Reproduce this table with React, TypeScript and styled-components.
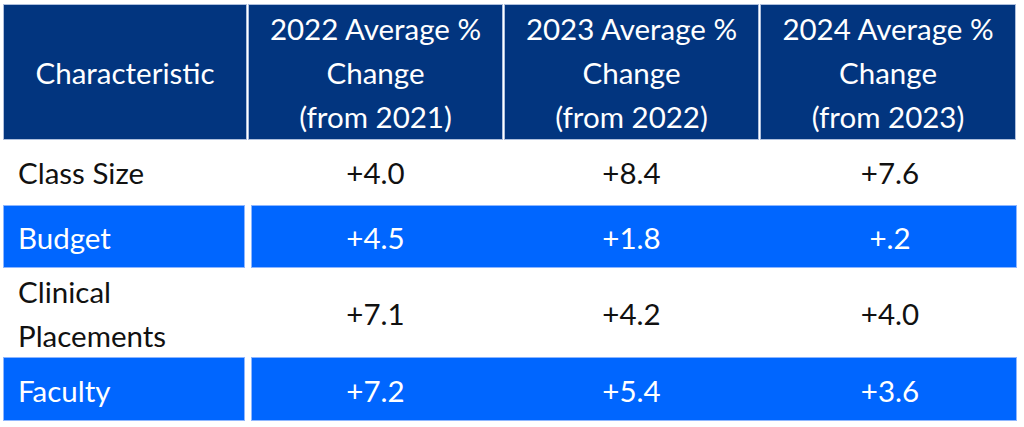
import styled, { createGlobalStyle } from "styled-components"

const GlobalStyle = createGlobalStyle`
  html, body {
    margin: 0;
    padding: 0;
    background: #ffffff;
  }
  body {
    font-family: "Lato", "Liberation Sans", sans-serif;
  }
`

const NAVY = "#02357f"
const BLUE = "#0066ff"

const Table = styled.div`
  width: 1024px;
  height: 427px;
  box-sizing: border-box;
  padding: 5px 0 0 4px;
  display: flex;
  flex-direction: column;
  font-size: 29.5px;
  line-height: 44px;
`

const HeaderRow = styled.div`
  display: grid;
  grid-template-columns: 242px 253px 253px 254px;
  column-gap: 3px;
  height: 132px;
`

const HeaderCell = styled.div`
  background: ${NAVY};
  box-shadow: 0 0 0 1px #aebfdd;
  color: #ffffff;
  display: flex;
  align-items: center;
  justify-content: center;
  text-align: center;
  padding-top: 2px;
`

const Row = styled.div<{ $height: number; $shaded?: boolean }>`
  display: grid;
  grid-template-columns: 240px 764px;
  column-gap: 8px;
  height: ${(p) => p.$height}px;
  color: ${(p) => (p.$shaded ? "#ffffff" : "#111111")};

  & > div {
    background: ${(p) => (p.$shaded ? BLUE : "transparent")};
    box-shadow: ${(p) => (p.$shaded ? "0 0 0 1px #8db6ff" : "none")};
    padding-top: 3px;
  }
`

const Label = styled.div`
  display: flex;
  align-items: center;
  padding-left: 14px;
`

const Values = styled.div`
  display: grid;
  grid-template-columns: 247px 265px 1fr;
`

const Value = styled.span`
  display: flex;
  align-items: center;
  justify-content: center;
`

const headers = [
  ["Characteristic"],
  ["2022 Average %", "Change", "(from 2021)"],
  ["2023 Average %", "Change", "(from 2022)"],
  ["2024 Average %", "Change", "(from 2023)"],
]

const rows = [
  { label: ["Class Size"], values: ["+4.0", "+8.4", "+7.6"], height: 69, shaded: false },
  { label: ["Budget"], values: ["+4.5", "+1.8", "+.2"], height: 61, shaded: true },
  { label: ["Clinical", "Placements"], values: ["+7.1", "+4.2", "+4.0"], height: 91, shaded: false },
  { label: ["Faculty"], values: ["+7.2", "+5.4", "+3.6"], height: 62, shaded: true },
]

export default function App() {
  return (
    <>
      <GlobalStyle />
      <Table>
        <HeaderRow>
          {headers.map((lines, i) => (
            <HeaderCell key={i}>
              <div>
                {lines.map((l) => (
                  <div key={l}>{l}</div>
                ))}
              </div>
            </HeaderCell>
          ))}
        </HeaderRow>
        {rows.map((r) => (
          <Row key={r.label.join(" ")} $height={r.height} $shaded={r.shaded}>
            <Label>
              <div>
                {r.label.map((l) => (
                  <div key={l}>{l}</div>
                ))}
              </div>
            </Label>
            <Values>
              {r.values.map((v, i) => (
                <Value key={i}>{v}</Value>
              ))}
            </Values>
          </Row>
        ))}
      </Table>
    </>
  )
}
